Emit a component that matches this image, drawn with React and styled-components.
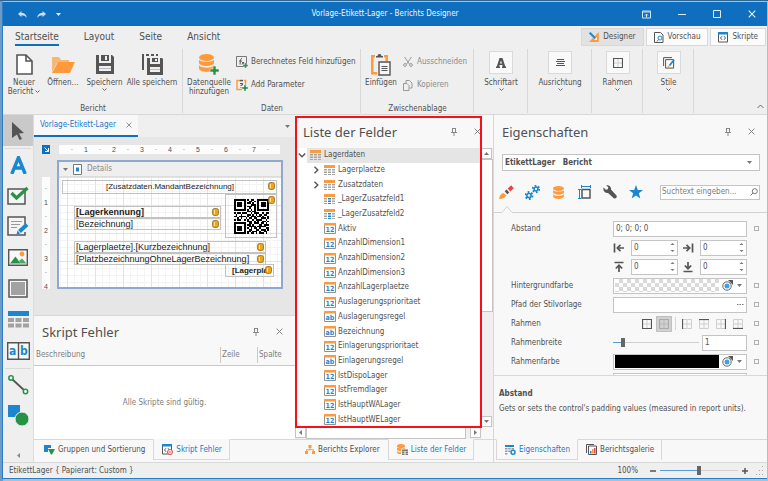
import React from "react";
import styled, { createGlobalStyle, css } from "styled-components";

const c = {
  title: "#106ebe",
  chrome: "#efefef",
  panel: "#f8f8f8",
  line: "#d8d8d8",
  text: "#505050",
  mute: "#8a8a8a",
  accent: "#1a78cc",
  blue: "#1b87cf",
  orange: "#ff9a3c",
  green: "#259247",
  dark: "#555555",
  field: "#c4c4c4",
};

const Global = createGlobalStyle`
  *, *::before, *::after { box-sizing: border-box; }
  body { margin: 0; font-family: "DejaVu Sans Condensed", "DejaVu Sans", sans-serif; font-size: 8px; line-height: 10px; color: ${c.text}; }
  button, input, select { font: inherit; color: inherit; margin: 0; padding: 0; }
  button { background: none; border: 0; white-space: nowrap; cursor: default; }
  svg { display: block; flex: none; }
`;

/* ---------- window ---------- */
const Desktop = styled.div`
  height: 100vh;
  padding: 1px 1px 2px 2px;
  background: linear-gradient(90deg, #6d9cc8 0 3px, #a9bfd3 3px);
  border-top: 1px solid #2d6592;
`;
const Window = styled.div`
  height: 100%;
  display: grid;
  grid-template-rows: 24px 89px minmax(0, 1fr) 16px;
  border-left: 1px solid #2b7cc2;
  border-bottom: 1px solid #2b7cc2;
  background: ${c.chrome};
`;
const TitleBar = styled.header`
  display: grid;
  grid-template-columns: 1fr auto 1fr;
  align-items: center;
  background: ${c.title};
  color: #f0f6fc;
`;
const QuickAccess = styled.div`
  display: flex;
  align-items: center;
  gap: 10px;
  padding-left: 15px;
`;
const WindowButtons = styled.div`
  display: flex;
  justify-content: flex-end;
  gap: 27px;
  padding-right: 11px;
`;
const IconButton = styled.button`
  display: grid;
  place-items: center;
  color: inherit;
`;
const ToolboxCollapse = styled(IconButton)`
  margin-top: auto;
`;

/* ---------- ribbon ---------- */
const Ribbon = styled.nav`
  display: grid;
  grid-template-rows: 22px minmax(0, 1fr);
  border-bottom: 1px solid ${c.line};
`;
const TabStrip = styled.div`
  display: flex;
  justify-content: space-between;
`;
const RibbonTabs = styled.div`
  display: flex;
  gap: 25px;
  padding-left: 12px;
`;
const RibbonTab = styled.button`
  font-size: 10px;
  line-height: 15px;
  padding-top: 3px;
  align-self: start;
  border-bottom: 2px solid ${(p) => (p.$active ? c.title : "transparent")};
`;
const ViewModes = styled.div`
  display: flex;
  gap: 2px;
  padding: 2px 1px 2px 0;
`;
const ModeButton = styled.button`
  display: flex;
  align-items: center;
  gap: 4px;
  padding: 0 7px;
  border: 1px solid ${c.line};
  background: ${(p) => (p.$active ? "#e2e2e2" : "#fbfbfb")};
`;
const Groups = styled.div`
  display: flex;
  padding: 1px 0 1px;
`;
const Group = styled.section`
  width: ${(p) => p.$width}px;
  display: flex;
  flex-direction: column;
  justify-content: space-between;
  border-right: 1px solid ${c.line};
  padding: 2px 2px 0 3px;
`;
const GroupItems = styled.div`
  display: flex;
  justify-content: ${(p) => (p.$center ? "center" : "flex-start")};
`;
const GroupLabel = styled.div`
  text-align: center;
  line-height: 8px;
`;
const BigButton = styled.button`
  width: ${(p) => p.$width}px;
  display: flex;
  flex-direction: column;
  align-items: center;
  line-height: 9px;
`;
const BigIcon = styled.span`
  height: 27px;
  display: grid;
  place-items: center;
`;
const FramedIcon = styled.span`
  width: 24px;
  height: 23px;
  margin-bottom: 4px;
  display: grid;
  place-items: center;
  border: 1px solid #dadada;
  background: #f9f9f9;
`;
const BigText = styled.span`
  display: flex;
  align-items: center;
  justify-content: center;
  gap: 2px;
`;
const SmallButtons = styled.div`
  display: flex;
  flex-direction: column;
  gap: 11px;
  padding: 5px 0 0 4px;
`;
const SmallButton = styled.button`
  display: flex;
  align-items: center;
  gap: 3px;
  height: 12px;
  color: ${(p) => (p.disabled ? c.mute : c.text)};
`;
const Collapse = styled(IconButton)`
  margin: auto 3px 4px auto;
`;

/* ---------- workspace ---------- */
const Workspace = styled.main`
  display: grid;
  grid-template-columns: 31px minmax(0, 261fr) minmax(0, 198fr) minmax(0, 274fr);
  min-height: 0;
`;
const Toolbox = styled.aside`
  display: flex;
  flex-direction: column;
  border-right: 1px solid #dcdcdc;
`;
const Tool = styled.button`
  height: 31px;
  display: grid;
  place-items: center;
  background: ${(p) => (p.$active ? "#c9c9c9" : "transparent")};
`;
const ToolRule = styled.div`
  height: 1px;
  margin: 2px 2px 0;
  background: #dadada;
`;
const Column = styled.div`
  display: grid;
  grid-template-rows: 22px minmax(0, 178fr) minmax(0, 147fr);
  min-height: 0;
`;
const DocTabs = styled.div`
  display: flex;
  justify-content: space-between;
  align-items: stretch;
  padding-right: 5px;
  background: ${c.chrome};
`;
const DocTab = styled.div`
  display: flex;
  align-items: center;
  gap: 10px;
  padding: 0 6px;
  color: ${c.accent};
  background: #f8f8f8;
  border-bottom: 2px solid ${c.title};
`;
const Designer = styled.section`
  background: #e6e6e6;
  display: grid;
  grid-template-columns: 8px minmax(0, 1fr);
  grid-template-rows: 9px minmax(0, 1fr);
  gap: 6px 7px;
  padding: 8px 12px 26px 8px;
`;
const Corner = styled.div`
  background: ${c.title};
  display: grid;
  place-items: center;
`;
const RulerX = styled.div`
  display: flex;
  align-items: center;
  margin: 0 3px 0 2px;
  padding-left: 6px;
  background: #fcfcfc;
  font: 7px/9px "Liberation Sans", sans-serif;
`;
const RulerY = styled.div`
  display: flex;
  flex-direction: column;
  margin-top: 17px;
  padding-top: 5px;
  background: #fcfcfc;
  font: 7px/14px "Liberation Sans", sans-serif;
`;
const Tick = styled.span`
  flex: 0 0 14px;
  text-align: center;
`;
const Band = styled.div`
  border: 2px solid #8ea9cd;
  display: flex;
  flex-direction: column;
  min-width: 0;
`;
const BandHead = styled.div`
  height: 15px;
  display: flex;
  align-items: center;
  gap: 5px;
  padding-left: 4px;
  background: #efefef;
  border-bottom: 1px solid #dcdcdc;
  color: #8a8a8a;
`;
const Sheet = styled.div`
  flex: 1;
  position: relative;
  overflow: hidden;
  background-color: #fff;
  background-image: linear-gradient(90deg, #e3e3e3 1px, transparent 1px), linear-gradient(#e3e3e3 1px, transparent 1px),
    linear-gradient(90deg, #f4f4f4 1px, transparent 1px), linear-gradient(#f4f4f4 1px, transparent 1px);
  background-size: 28px 28px, 28px 28px, 7px 7px, 7px 7px;
  background-position: 8px 0;
`;
const Item = styled.div`
  position: absolute;
  left: ${(p) => p.$x}px;
  top: ${(p) => p.$y}px;
  width: ${(p) => p.$w}px;
  height: ${(p) => p.$h}px;
  display: flex;
  align-items: center;
  justify-content: ${(p) => (p.$center ? "center" : "flex-start")};
  padding-left: 1px;
  border: 1px solid #c2c2c2;
  font: ${(p) => (p.$bold ? "bold" : "normal")} ${(p) => p.$size || 9}px/10px "Liberation Sans", sans-serif;
  color: #222;
  white-space: nowrap;
`;
const Pin = styled.span`
  position: absolute;
  top: 1px;
  right: 1px;
`;

/* ---------- docked panels ---------- */
const Panel = styled.section`
  display: flex;
  flex-direction: column;
  min-width: 0;
  min-height: 0;
  position: relative;
  background: ${c.panel};
  border-left: ${(p) => (p.$edge ? `1px solid ${c.line}` : "0")};
  border-top: ${(p) => (p.$top ? `1px solid ${c.line}` : "0")};
`;
const PanelHead = styled.div`
  height: ${(p) => p.$height || 33}px;
  flex: none;
  display: flex;
  align-items: center;
  justify-content: space-between;
  padding: 0 12px 0 8px;
`;
const PanelTitle = styled.h2`
  margin: 0;
  font-family: "Noto Sans", sans-serif;
  font-size: 13px;
  line-height: 18px;
  font-weight: 400;
`;
const PanelTools = styled.div`
  display: flex;
  align-items: center;
  gap: 17px;
  color: #7d7d7d;
`;
const DockTabs = styled.div`
  flex: none;
  height: 23px;
  display: flex;
  border-top: 1px solid ${c.line};
  padding-left: ${(p) => p.$left || 0}px;
  background: ${c.panel};
`;
const DockTab = styled.button`
  height: 21px;
  margin-top: -1px;
  display: flex;
  align-items: center;
  gap: 3px;
  padding: 0 7px 0 ${(p) => p.$pad || 8}px;
  color: ${(p) => (p.$active ? c.accent : c.text)};
  ${(p) =>
    p.$active
      ? css`
          background: ${c.panel};
          border: 1px solid ${c.line};
          border-top-color: ${c.panel};
        `
      : css`
          border-right: 1px solid ${p.$rule ? c.line : "transparent"};
        `}
`;
const ErrorTable = styled.table`
  flex: 1;
  width: 100%;
  display: flex;
  flex-direction: column;
  color: #7c7c7c;
`;
const ErrorHead = styled.thead`
  display: block;
  border-bottom: 1px solid #c9c9c9;
  padding-bottom: 2px;
`;
const ErrorRow = styled.tr`
  display: grid;
  grid-template-columns: minmax(0, 1fr) 37px 38px;
`;
const ErrorCell = styled.th`
  font-weight: 400;
  text-align: left;
  line-height: 14px;
  padding-left: 1px;
  border-left: 1px solid ${(p) => (p.$rule ? "#c9c9c9" : "transparent")};
`;
const ErrorBody = styled.tbody`
  flex: 1;
  display: grid;
  place-items: center;
  background: #fff;
`;

/* ---------- field list ---------- */
const Highlight = styled.div`
  position: absolute;
  inset: 1px 11px 34px 0;
  border: 2px solid #fa0f16;
  pointer-events: none;
`;
const TreeArea = styled.div`
  flex: 1;
  min-height: 0;
  display: grid;
  grid-template-columns: minmax(0, 1fr) 12px;
  grid-template-rows: minmax(0, 1fr) 12px;
`;
const Tree = styled.ul`
  margin: 0;
  padding: 0 0 0 3px;
  list-style: none;
  display: grid;
  grid-auto-rows: minmax(0, 1fr);
  background: #fff;
`;
const Node = styled.li`
  display: grid;
  grid-template-columns: 10px 12px 1fr;
  gap: 0 2px;
  align-items: center;
  white-space: nowrap;
  padding-left: ${(p) => p.$level * 14}px;
  background: ${(p) => (p.$selected ? "linear-gradient(90deg, #fff 9px, #e5e5e5 9px)" : "none")};
`;
const Scroll = styled.div`
  display: flex;
  flex-direction: ${(p) => (p.$row ? "row" : "column")};
  background: #efefef;
`;
const ScrollButton = styled.button`
  flex: none;
  width: 11px;
  height: 11px;
  display: grid;
  place-items: center;
  border: 1px solid ${c.field};
  background: #fff;
`;
const Thumb = styled.div`
  flex: ${(p) => p.$grow};
  border: 1px solid ${c.field};
  background: #fff;
`;
const Gap = styled.div`
  flex: ${(p) => p.$grow};
`;

/* ---------- properties ---------- */
const ObjectSelect = styled.div`
  margin: 6px 7px 0 8px;
  height: 17px;
  flex: none;
  display: grid;
  grid-template-columns: minmax(0, 1fr) 12px;
  align-items: center;
  border: 1px solid ${c.field};
  background: #fff;
  select {
    appearance: none;
    border: 0;
    background: none;
    padding-left: 2px;
    font-weight: 700;
    outline: 0;
  }
`;
const Categories = styled.div`
  flex: none;
  height: 38px;
  display: flex;
  align-items: center;
  justify-content: space-between;
  padding: 4px 7px 0 4px;
`;
const CategoryButtons = styled.div`
  display: flex;
  gap: 10px;
`;
const Category = styled(IconButton)`
  width: 16px;
  height: 16px;
`;
const Search = styled.label`
  width: 100px;
  height: 15px;
  display: flex;
  align-items: center;
  border: 1px solid ${c.field};
  background: #fff;
  padding: 0 1px;
  input {
    flex: 1;
    min-width: 0;
    border: 0;
    outline: 0;
    background: none;
  }
  input::placeholder {
    color: #7c7c7c;
    opacity: 1;
  }
`;
const Notch = styled.svg`
  width: 100%;
  height: 7px;
  margin-top: -3px;
  stroke: #d2d2d2;
  fill: none;
`;
const PropertyList = styled.div`
  flex: 1;
  min-height: 0;
  overflow: hidden;
  padding: 7px 8px 0 17px;
  display: flex;
  flex-direction: column;
  gap: 2px;
  border-bottom: 1px solid ${c.line};
`;
const PropertyRow = styled.div`
  flex: none;
  height: 17px;
  display: grid;
  grid-template-columns: minmax(0, 102fr) minmax(0, 134fr) 12px;
  align-items: center;
`;
const Marker = styled.button`
  width: 5px;
  height: 5px;
  border: 1px solid #b0b0b0;
  justify-self: end;
`;
const Box = styled.div`
  height: 16px;
  display: flex;
  align-items: center;
  border: 1px solid ${c.field};
  background: #fff;
  padding: 0 ${(p) => (p.$tight ? 1 : 2)}px;
  min-width: 0;
  input {
    flex: 1;
    width: 100%;
    min-width: 0;
    border: 0;
    outline: 0;
    background: none;
  }
`;
const Pair = styled.div`
  display: grid;
  grid-template-columns: 14px minmax(0, 1fr) 14px minmax(0, 1fr);
  gap: 0 4px;
  align-items: center;
`;
const Swatch = styled.span`
  flex: 1;
  height: 13px;
  background: ${(p) => (p.$black ? "#000" : "repeating-conic-gradient(#d9d9d9 0 25%, #fff 0 50%) 0 0 / 8px 8px")};
`;
const SwatchTools = styled.span`
  width: 26px;
  display: flex;
  align-items: center;
  justify-content: space-between;
  padding: 0 3px;
`;
const Borders = styled.div`
  display: flex;
  align-items: center;
  justify-content: flex-end;
  gap: 1px;
  padding-right: 1px;
`;
const BorderButton = styled.button`
  width: 16px;
  height: 16px;
  display: grid;
  place-items: center;
  background: ${(p) => (p.$active ? "#d0d0d0" : "none")};
  border: 1px solid ${(p) => (p.$active ? "#c0c0c0" : "transparent")};
`;
const BorderRule = styled.span`
  width: 1px;
  height: 13px;
  margin: 0 2px;
  background: ${c.line};
`;
const WidthRow = styled.div`
  display: grid;
  grid-template-columns: minmax(0, 1fr) 45px;
  gap: 3px;
  align-items: center;
`;
const Range = styled.input`
  appearance: none;
  width: 100%;
  height: 11px;
  background: linear-gradient(90deg, #5b9bd5 ${(p) => p.$fill}, #cfcfcf ${(p) => p.$fill}) center / 100% 1px no-repeat;
  &::-webkit-slider-thumb {
    appearance: none;
    width: 4px;
    height: 9px;
    background: #666;
  }
`;
const Description = styled.div`
  flex: none;
  height: 63px;
  padding: 12px 5px 0;
  h3 {
    margin: 0 0 5px;
    font-size: 8px;
    line-height: 11px;
  }
  p {
    margin: 0;
    white-space: nowrap;
  }
`;

const StatusBar = styled.footer`
  display: flex;
  align-items: center;
  justify-content: space-between;
  padding: 0 3px 0 6px;
  border-top: 1px solid ${c.line};
`;
const Zoom = styled.div`
  display: flex;
  align-items: center;
  gap: 4px;
`;
const ZoomText = styled.span`
  margin-right: 8px;
`;
const ZoomTrack = styled.div`
  width: 78px;
  display: grid;
`;

/* ---------- icons ---------- */
const Ico = ({ w = 16, h = w, box, children, ...rest }) => (
  <svg width={w} height={h} viewBox={box || `0 0 ${w} ${h}`} fill="none" aria-hidden="true" {...rest}>
    {children}
  </svg>
);
const Close = ({ size = 7, color = "#7d7d7d" }) => (
  <Ico w={size} box="0 0 8 8" stroke={color} strokeWidth="1.1"><path d="M.7.7l6.6 6.6M7.3.7L.7 7.3" /></Ico>
);
const PinIcon = () => (
  <Ico w={6} h={8} stroke="#888"><path d="M1 .5h4M1.500 1v3M4.500 1v3M0 4.500h6M3 5v3" /></Ico>
);
const Caret = ({ dir = "down", color = "#777" }) => {
  const d = { down: "M0 1h5L2.500 4z", up: "M0 4h5L2.500 1z", left: "M4 0v5L1 2.500z", right: "M1 0v5l3-2.500z" }[dir];
  return <Ico w={5}><path d={d} fill={color} /></Ico>;
};
const Chevron = () => <Ico w={5} h={5} stroke="#666"><path d="M.5 1.500l2 2 2-2" /></Ico>;
const Undo = ({ flip }) => (
  <Ico w={9} h={7}><path transform={flip ? "matrix(-1 0 0 1 9 0)" : undefined} fill="#c9e2f8" d="M0 3L3.500 0v2C7 2 8.500 4 8.800 7 7.500 4.800 6 4.200 3.500 4.200V6z" /></Ico>
);
const Plus = ({ x, y, s = 8 }) => (
  <path transform={`translate(${x} ${y}) scale(${s / 8})`} fill={c.green} stroke="#efefef" strokeWidth=".5" d="M2.700 0h2.600v2.700H8v2.600H5.300V8H2.700V5.300H0V2.700h2.700z" />
);
const NewDoc = () => (
  <Ico w={17} h={21} stroke={c.dark} strokeWidth="1.600"><path fill="#fff" d="M1 1h9l6 6v13H1z" /><path d="M10 1v6h6" /></Ico>
);
const OpenFolder = () => (
  <Ico w={23} h={17}><path fill="#f7b876" d="M0 16V1h7l2 3h8v3H5z" /><path fill={c.orange} d="M6 6h17l-5 11H0z" /></Ico>
);
const SaveIcon = () => (
  <Ico w={18} h={19}><path fill={c.dark} d="M0 0h3v8h12V0h1l2 2v17H0z" /><path fill={c.dark} d="M5 0h8v6H5z" /><path fill="#efefef" d="M9 1h2v4H9zM3 11h12v5H3z" /><path fill="#bbb" d="M3 13h12v1H3z" /></Ico>
);
const SaveAll = () => (
  <Ico w={21} h={21}>
    <path fill={c.dark} d="M0 0h2v16H0zM4 0h3v2H4zM9 0h3v2H9zM14 0h2v2h-2zM5 4h3v6h10V4h2l1 1v16H5z" />
    <path fill={c.dark} d="M10 4h6v4h-6z" /><path fill="#efefef" d="M13 5h2v2h-2zM8 13h10v5H8z" /><path fill="#bbb" d="M8 15h10v1H8z" />
  </Ico>
);
const Database = ({ w = 15, h = 18, plus }) => (
  <Ico w={plus ? w + 5 : w} h={plus ? h + 3 : h} box={plus ? "0 0 20 21" : "0 0 15 18"}>
    <ellipse cx="7.500" cy="3.500" rx="7.500" ry="3.500" fill={c.orange} />
    <path fill={c.orange} d="M0 5.500c1 3 14 3 15 0V9c-1 4-14 4-15 0zM0 11c1 3.500 14 3.500 15 0v3.500c-1 4.500-14 4.500-15 0z" />
    {plus && <Plus x={11} y={12} s={9} />}
  </Ico>
);
const Fx = () => (
  <Ico w={12} h={12}><path d="M.5.500h10v10H.5z" stroke="#777" /><path stroke={c.dark} d="M6 2.500C4.500 2.200 4.500 4 4 8.500M3 5h3M6 6l2 2.500M8 6L6 8.500" /><Plus x={7} y={7} s={5} /></Ico>
);
const Param = () => (
  <Ico w={12} h={12}><path d="M3 1.500H1v9h5M8 1.500h1.500V6" stroke={c.orange} strokeWidth="1.400" /><path d="M3.500.8h3.500v1.500H3.500z" fill={c.dark} /><path stroke={c.dark} d="M4 4.500h2.500V6H5v1M5 8v1" /><Plus x={6} y={6} s={6} /></Ico>
);
const Paste = () => (
  <Ico w={20} h={22}>
    <path fill={c.orange} d="M0 1h4v2.500H2.500V18H6v2.500H0zM13 1h4v6h-2.500V3.500H13z" /><path fill={c.dark} d="M5 3.500V2h1.500a2 2 0 014 0H12v1.500z" />
    <path stroke={c.dark} strokeWidth="1.400" fill="#f6f6f6" d="M8 8h11v13H8z" /><path stroke={c.dark} d="M10.500 12.500h6M10.500 14.500h6M10.500 16.500h6" />
  </Ico>
);
const Cut = () => (
  <Ico w={12} h={10} box="-1 0 12 10" stroke="#999"><path d="M1.500 0l5 7M8.500 0l-5 7" /><circle cx="2" cy="8" r="1.400" /><circle cx="8" cy="8" r="1.400" /></Ico>
);
const Copy = () => (
  <Ico w={12} h={11} box="-1 0 12 11" stroke="#999"><path d="M3 3.500V.5h3.500L9 3v5H6.500M.5 3.500h3.500l2 2v5H.5z" /></Ico>
);
const FontIcon = () => <Ico w={10} h={10}><path fill={c.dark} fillRule="evenodd" d="M3.500 0h3L9.300 8.500H10V10H6V8.500h.8L6.300 7H3.600l-.5 1.500H4V10H0V8.500h.8zM5 2.500L4 5.500h2z" /></Ico>;
const Lines = () => <Ico w={9} h={9} stroke={c.dark}><path d="M1 1.500h7M0 3.500h9M1 5.500h7M0 7.500h9" /></Ico>;
const GridIcon = ({ side = "all", faded }) => {
  const strong = faded ? "#aaa" : c.dark;
  const sides = { left: "M.5 0v10", top: "M0 .5h10", right: "M9.500 0v10", bottom: "M0 9.500h10", all: "M.5.5h9v9h-9z" };
  return (
    <Ico w={10}><path stroke={faded ? "#b8b8b8" : "#cfcfcf"} d="M.5.5h9v9h-9zM5 1v8M1 5h8" /><path stroke={strong} strokeWidth="1.200" d={sides[side]} /></Ico>
  );
};
const StyleIcon = () => (
  <Ico w={12} h={12}><path stroke={c.dark} d="M.6 9V.6H9M2.600 2.600h8v8.500h-8z" /><path d="M6.500 8.500L11 3" stroke={c.blue} strokeWidth="1.800" /><path d="M4.500 11l.5-2.500 2 1.500z" fill={c.orange} /></Ico>
);
const DesignerIcon = () => (
  <Ico w={10} h={10}><path fill={c.orange} d="M9.800 0v10H0z" /><path fill="#efefef" d="M8 5v3H5z" /><path stroke={c.blue} strokeWidth="2" d="M.7.7L6 6" /></Ico>
);
const PreviewIcon = () => (
  <Ico w={10} h={11}><path stroke={c.dark} fill="#fff" d="M.5.5h6L9 3v7.500H.5z" /><circle cx="6" cy="6" r="2" stroke={c.blue} /><path stroke={c.blue} d="M4.500 7.500L3 9.500" /></Ico>
);
const ScriptIcon = ({ error }) => (
  <Ico w={error ? 11 : 10} h={11}><path stroke={c.dark} fill="#fff" d="M.5.5h9v9.500h-9z" /><path fill={c.blue} d="M0 0h10v2.500H0z" /><path stroke={c.dark} d="M4 4.200L2.500 6 4 7.800M6 4.200L7.500 6 6 7.800" />{error && <><circle cx="8" cy="8" r="2.500" stroke="#e8454a" fill="#fff" /><path stroke="#e8454a" d="M6.500 8h3" /></>}</Ico>
);
const Arrow = () => <Ico w={12} h={18}><path fill={c.dark} d="M0 0l12 11-5 .5 3 5.500-2.500 1-2.500-5.500L0 16z" /></Ico>;
const LabelIcon = () => <Ico w={17} h={18}><path stroke={c.blue} strokeWidth="3.400" d="M1.800 18L8.500 1.500 15.200 18M4 12h9" /></Ico>;
const CheckTool = () => (
  <Ico w={22} h={19}><path stroke={c.dark} strokeWidth="1.500" fill="#f4f4f4" d="M1 3h17v15H1z" /><path stroke={c.green} strokeWidth="3.200" d="M4.500 7l5 5L20.500 2" /></Ico>
);
const RichText = () => (
  <Ico w={22} h={21}><path stroke={c.dark} strokeWidth="1.500" fill="#f4f4f4" d="M18 8V1H1v18h17v-3" /><path stroke="#999" strokeWidth="1.200" d="M4 5.500h11M4 8.500h9M4 11.500h6" /><path stroke={c.blue} strokeWidth="4" d="M12.500 15.500l7.500-7" /><path fill={c.blue} d="M9.500 18.500l1-4 2.800 3z" /></Ico>
);
const Picture = () => (
  <Ico w={20} h={17}><path stroke={c.dark} strokeWidth="1.400" fill="#f8f8f8" d="M.7.7h18.600v15.600H.7z" /><circle cx="14" cy="5" r="2.400" fill={c.orange} /><path fill={c.green} d="M2 14.500l5.500-7 5 7z" /><path fill="#4aa866" d="M11 12l3-2.500 4.500 5h-6z" /></Ico>
);
const PanelTool = () => <Ico w={20} h={19}><path stroke={c.dark} strokeWidth="1.500" fill="#f8f8f8" d="M1 1h18v17H1z" /><path fill="#a2a2a2" d="M3 3h14v13H3z" /></Ico>;
const TableTool = () => <Ico w={21} h={17}><path fill={c.blue} d="M0 0h21v5H0z" /><path fill="#a2a2a2" d="M0 7h6v4H0zM7.500 7h6v4h-6zM15 7h6v4h-6zM0 12.500h6v4H0zM7.500 12.500h6v4h-6zM15 12.500h6v4h-6z" /></Ico>;
const CombTool = () => (
  <Ico w={23} h={18}><path stroke={c.dark} strokeWidth="1.400" fill="#f8f8f8" d="M.7.7h21.600v16.600H.7zM11.500 1v16" /><text x="2" y="13" fontSize="12" fontWeight="700" fill={c.blue}>a</text><text x="13" y="13" fontSize="12" fontWeight="700" fill={c.blue}>b</text></Ico>
);
const LineTool = () => <Ico w={21} h={20}><path stroke={c.dark} strokeWidth="1.800" d="M4 4l13 12" /><circle cx="3" cy="3" r="2.200" fill="#fff" stroke={c.green} strokeWidth="1.500" /><circle cx="17.500" cy="16.500" r="2.200" fill="#fff" stroke={c.green} strokeWidth="1.500" /></Ico>;
const ShapeTool = () => <Ico w={21} h={21}><path fill={c.blue} d="M0 0h12v12H0z" /><circle cx="14" cy="14" r="7" fill={c.green} stroke="#efefef" /></Ico>;
const TableIcon = ({ column }) => (
  <Ico w={11} h={10}><path fill={c.orange} d="M0 0h11v3H0z" /><path fill="#a5a5a5" d="M0 4h3v1.500H0zM8 4h3v1.500H8zM0 6.500h3V8H0zM8 6.500h3V8H8zM0 9h3v1H0zM8 9h3v1H8z" /><path fill={column ? c.blue : "#a5a5a5"} d="M4 4h3v1.500H4zM4 6.500h3V8H4zM4 9h3v1H4z" /></Ico>
);
const FieldIcon = ({ label }) => (
  <Ico w={12} h={11}><path stroke="#909090" fill="#fff" d="M.5.5h11v10H.5z" /><path fill={c.orange} d="M0 0h12v2.500H0z" /><text x="6" y="8.800" fontSize="7" fontWeight="700" textAnchor="middle" fill={c.blue}>{label}</text></Ico>
);
const Cylinder = () => (
  <Ico w={7} h={8}><rect x=".5" y=".5" width="6" height="7" rx="2" fill="#eba51c" stroke="#9a6614" strokeWidth=".8" /><path stroke="#ffe9a8" d="M2.500 2v4" /></Ico>
);
const Expander = ({ open }) => <Ico w={8} h={8} stroke={c.dark} strokeWidth="1.400"><path d={open ? "M.8 2.500L4 5.800l3.200-3.300" : "M2.500.8L5.800 4 2.500 7.200"} /></Ico>;
const Brush = () => <Ico w={15} h={14}><path stroke="#e8434a" strokeWidth="4" d="M10 5l3.500-3.200" /><path stroke={c.dark} strokeWidth="4" d="M7 7.700l2-1.800" /><path fill={c.orange} d="M0 14c.5-3 2-5.500 4.500-6L7.500 10.500C6 13 3 14 0 14z" /></Ico>;
const Gear = ({ x, y, r }) => <g transform={`translate(${x} ${y})`}><circle r={r} stroke={c.blue} strokeWidth="2" strokeDasharray={`${(r * 6.283) / 12}`} /><circle r={r - 1.300} stroke={c.blue} strokeWidth="1.500" /></g>;
const Gears = () => <Ico w={15} h={15}><Gear x={4} y={10.500} r={3.400} /><Gear x={11} y={4} r={3.200} /></Ico>;
const Size = () => <Ico w={13} h={14}><path stroke={c.dark} strokeWidth="1.500" d="M4 4.500h8V13H4z" /><path stroke={c.blue} d="M3.500 1.500h9M3.500 0v3M12.500 0v3M1.500 4v9.500M0 4.500h3M0 13.500h3" /></Ico>;
const Wrench = () => <Ico w={14} h={14}><path fill={c.dark} d="M.5 2.500l2.300 2.300 2-.6.500-2L3.200.4C5.800-.5 8.500 1.500 8 4.500l5.500 6c1 2-1 3.800-2.700 2.700L5 8C2 8.500-.3 5.500.5 2.500z" /></Ico>;
const Star = () => <Ico w={14} h={14}><path fill={c.blue} d="M7 0l1.800 5H14L9.800 8.200l1.500 5.300L7 10.400l-4.300 3.100 1.500-5.300L0 5h5.200z" /></Ico>;
const Lens = () => <Ico w={8} h={8} stroke="#777"><circle cx="4.800" cy="3.200" r="2.500" /><path d="M3 5L.5 7.500" /></Ico>;
const PadArrow = ({ turn }) => <Ico w={12} h={12} stroke={c.dark} strokeWidth="1.700"><path transform={`rotate(${turn} 6 6)`} d="M1.500 1.500v9M11 6H4.500M7.500 2.800L4.300 6l3.200 3.200" /></Ico>;
const ColorEye = () => <Ico w={11} h={11}><circle cx="5" cy="6" r="4.200" stroke="#666" fill="#fff" /><path fill="#555" d="M6 0h5v5z" /><circle cx="5" cy="6" r="2.500" fill="#3da4e4" /></Ico>;
const Spin = () => <Ico w={5} h={11}><path fill="#777" d="M.5 3h4L2.500 1zM.5 8h4l-2 2z" /></Ico>;
const Dots = () => <Ico w={7} h={2}><path fill="#777" d="M0 0h1.500v1H0zM2.500 0H4v1H2.500zM5 0h1.500v1H5z" /></Ico>;
const SortIcon = () => <Ico w={11} h={10}><path fill={c.blue} d="M0 0h7v3H4v4H0z" /><path fill={c.green} d="M4 4h7L8 9.500H7z" /></Ico>;
const Hierarchy = () => <Ico w={10} h={9}><path fill={c.orange} d="M3.500 0h3v3h-3zM0 6h3v3H0zM7 6h3v3H7z" /><path stroke={c.orange} d="M5 3v2M1.500 6V4.700h7V6" /></Ico>;
const FieldListIcon = () => <Ico w={11} h={11}><ellipse cx="4" cy="2" rx="4" ry="2" fill={c.orange} /><path fill={c.orange} d="M0 3.200c1 1.500 7 1.500 8 0v1.600H4v2.400C2 7 0 6.500 0 5.500zM0 7c1 1 2 1.300 4 1.300V10C2 10 0 9.500 0 8.500z" /><path fill="#777" d="M5 5.500h6V7H5zM5 7.500h2.500V9H5zM8.500 7.500H11V9H8.500zM5 9.500h2.500V11H5zM8.500 9.500H11V11H8.500z" /></Ico>;
const PropsIcon = () => <Ico w={11} h={10}><path fill={c.blue} d="M0 0h9v2H0z" /><path fill="#999" d="M0 3h2.500v1.500H0zM3.200 3h2.500v1.500H3.200zM6.500 3H9v1.500H6.500zM0 5.500h2.500V7H0zM3.200 5.500h2V7h-2zM0 8h2.500v1.500H0z" /><circle cx="8" cy="7.200" r="2" stroke={c.blue} strokeWidth="1.500" /></Ico>;
const Gallery = () => <Ico w={11} h={11}><path stroke={c.dark} d="M.5 9V.5H8M2.500 2h8v8.500h-8z" /><path fill={c.blue} d="M4 7h1.500v2.500H4z" /><path fill={c.orange} d="M6 5h1.500v4.500H6z" /><path fill="#e8434a" d="M8 4h1.500v5.500H8z" /></Ico>;

const qrRows = [
  "111111101011001111111", "100000100110101000001", "101110101101001011101", "101110100011101011101",
  "101110101110101011101", "100000100100101000001", "111111101010101111111", "000000001101100000000",
  "101101110010111001011", "010010001101010110110", "110111101011101101001", "001010010110110011101",
  "101100101001011110010", "000000001110101001101", "111111100110111011010", "100000101101000110111",
  "101110100111101111100", "101110101010110100011", "101110100110011011101", "100000101101110100110", "111111101011010111010",
];
const QrCode = () => (
  <Ico w={35} h={35} box="0 0 21 21" shapeRendering="crispEdges">
    <path fill="#000" d={qrRows.map((r, y) => [...r].map((v, x) => (v === "1" ? `M${x} ${y}h1v1h-1z` : "")).join("")).join("")} />
  </Ico>
);

/* ---------- pieces ---------- */
const Big = ({ width, icon, framed, lines, menu, inlineMenu }) => (
  <BigButton $width={width}>
    {framed ? <FramedIcon>{icon}</FramedIcon> : <BigIcon>{icon}</BigIcon>}
    {lines.map((t, i) => (
      <BigText key={t}>{t}{inlineMenu && i === lines.length - 1 && <Chevron />}</BigText>
    ))}
    {menu && <Chevron />}
  </BigButton>
);
const Head = ({ title, ...rest }) => (
  <PanelHead {...rest}>
    <PanelTitle>{title}</PanelTitle>
    <PanelTools>
      <IconButton aria-label="Anheften"><PinIcon /></IconButton>
      <IconButton aria-label="Schließen"><Close /></IconButton>
    </PanelTools>
  </PanelHead>
);
const tree = [
  [0, "table", "Lagerdaten", true], [1, "table", "Lagerplaetze", false], [1, "table", "Zusatzdaten", false],
  [1, "column", "_LagerZusatzfeld1"], [1, "column", "_LagerZusatzfeld2"], [1, "12", "Aktiv"],
  [1, "12", "AnzahlDimension1"], [1, "12", "AnzahlDimension2"], [1, "12", "AnzahlDimension3"],
  [1, "12", "AnzahlLagerplaetze"], [1, "12", "Auslagerungsprioritaet"], [1, "ab", "Auslagerungsregel"],
  [1, "ab", "Bezeichnung"], [1, "12", "Einlagerungsprioritaet"], [1, "ab", "Einlagerungsregel"],
  [1, "12", "IstDispoLager"], [1, "12", "IstFremdlager"], [1, "12", "IstHauptWALager"], [1, "12", "IstHauptWELager"],
];
const Spinner = ({ label }) => (
  <Box><input aria-label={label} defaultValue="0" /><Spin /></Box>
);
const Property = ({ label, id, children, marker = true }) => (
  <PropertyRow>
    {id ? <label htmlFor={id}>{label}</label> : <span>{label}</span>}
    {children}
    {marker && <Marker aria-label={`${label} zurücksetzen`} />}
  </PropertyRow>
);
const tools = [[<LabelIcon />, "Label"], [<CheckTool />, "Check Box"], [<RichText />, "Rich Text"], [<Picture />, "Bild"], [<PanelTool />, "Panel"], [<TableTool />, "Tabelle"], [<CombTool />, "Zeichenkamm"]];

export default function App() {
  return (
    <Desktop>
      <Global />
      <Window>
        <TitleBar>
          <QuickAccess>
            <IconButton aria-label="Rückgängig"><Undo /></IconButton>
            <IconButton aria-label="Wiederholen"><Undo flip /></IconButton>
            <IconButton aria-label="Anpassen"><Caret color="#e6f2fc" /></IconButton>
          </QuickAccess>
          <span>Vorlage-Etikett-Lager - Berichts Designer</span>
          <WindowButtons>
            <IconButton aria-label="Ribbon"><Ico w={9} h={9} stroke="#cfe5f8"><path d="M.5 1h8v7h-8zM.5 2h8M4.500 7.500V4M3 5.500L4.500 4 6 5.500" /></Ico></IconButton>
            <IconButton aria-label="Minimieren"><Ico w={8} h={8} stroke="#dcecfa"><path d="M0 4.500h8" /></Ico></IconButton>
            <IconButton aria-label="Maximieren"><Ico w={8} h={8} stroke="#dcecfa"><path d="M.5.5h7v7h-7z" /></Ico></IconButton>
            <IconButton aria-label="Schließen"><Close size={8} color="#e6f2fc" /></IconButton>
          </WindowButtons>
        </TitleBar>

        <Ribbon>
          <TabStrip>
            <RibbonTabs>
              <RibbonTab $active>Startseite</RibbonTab>
              <RibbonTab>Layout</RibbonTab>
              <RibbonTab>Seite</RibbonTab>
              <RibbonTab>Ansicht</RibbonTab>
            </RibbonTabs>
            <ViewModes>
              <ModeButton $active><DesignerIcon />Designer</ModeButton>
              <ModeButton><PreviewIcon />Vorschau</ModeButton>
              <ModeButton><ScriptIcon />Skripte</ModeButton>
            </ViewModes>
          </TabStrip>
          <Groups>
            <Group $width={180}>
              <GroupItems>
                <Big width={36} icon={<NewDoc />} lines={["Neuer", "Bericht"]} inlineMenu />
                <Big width={42} icon={<OpenFolder />} lines={["Öffnen…"]} />
                <Big width={41} icon={<SaveIcon />} lines={["Speichern"]} menu />
                <Big width={54} icon={<SaveAll />} lines={["Alle speichern"]} />
              </GroupItems>
              <GroupLabel>Bericht</GroupLabel>
            </Group>
            <Group $width={178}>
              <GroupItems>
                <Big width={46} icon={<Database plus />} lines={["Datenquelle", "hinzufügen"]} />
                <SmallButtons>
                  <SmallButton><Fx />Berechnetes Feld hinzufügen</SmallButton>
                  <SmallButton><Param />Add Parameter</SmallButton>
                </SmallButtons>
              </GroupItems>
              <GroupLabel>Daten</GroupLabel>
            </Group>
            <Group $width={113}>
              <GroupItems>
                <Big width={34} icon={<Paste />} lines={["Einfügen"]} />
                <SmallButtons>
                  <SmallButton disabled><Cut />Ausschneiden</SmallButton>
                  <SmallButton disabled><Copy />Kopieren</SmallButton>
                </SmallButtons>
              </GroupItems>
              <GroupLabel>Zwischenablage</GroupLabel>
            </Group>
            <Group $width={54}><GroupItems $center><Big width={44} framed icon={<FontIcon />} lines={["Schriftart"]} menu /></GroupItems></Group>
            <Group $width={64}><GroupItems $center><Big width={50} framed icon={<Lines />} lines={["Ausrichtung"]} menu /></GroupItems></Group>
            <Group $width={51}><GroupItems $center><Big width={40} framed icon={<GridIcon />} lines={["Rahmen"]} menu /></GroupItems></Group>
            <Group $width={51}><GroupItems $center><Big width={40} framed icon={<StyleIcon />} lines={["Stile"]} menu /></GroupItems></Group>
            <Collapse aria-label="Ribbon einklappen"><Ico w={7} h={5} stroke="#666"><path d="M.5 4l3-3 3 3" /></Ico></Collapse>
          </Groups>
        </Ribbon>

        <Workspace>
          <Toolbox>
            <Tool $active aria-label="Zeiger"><Arrow /></Tool>
            <ToolRule />
            {tools.map(([icon, name]) => <Tool key={name} aria-label={name}>{icon}</Tool>)}
            <ToolRule />
            <Tool aria-label="Linie"><LineTool /></Tool>
            <Tool aria-label="Form"><ShapeTool /></Tool>
            <ToolboxCollapse aria-label="Toolbox einklappen"><Ico w={5} h={12}><path fill="#888" d="M4 3v5L1 5.500z" /></Ico></ToolboxCollapse>
          </Toolbox>

          <Column>
            <DocTabs>
              <DocTab>Vorlage-Etikett-Lager<IconButton aria-label="Tab schließen"><Close size={6} /></IconButton></DocTab>
              <IconButton aria-label="Weitere Tabs"><Caret /></IconButton>
            </DocTabs>
            <Designer>
              <Corner><Ico w={5} h={5} stroke="#fff"><path d="M.5.5l3.500 3.500M4.500 1v3.500H1" /></Ico></Corner>
              <RulerX>{[..."·1·2·3·4·5·6·7·"].map((t, i) => <Tick key={i}>{t}</Tick>)}</RulerX>
              <RulerY>{[..."·1·2·3·4"].map((t, i) => <Tick key={i}>{t}</Tick>)}</RulerY>
              <Band>
                <BandHead><Caret /><Ico w={9} h={11}><path stroke="#777" fill="#fff" d="M.5.5h8v10h-8z" /><path fill={c.blue} d="M3 3.500h3v4H3z" /></Ico>Details</BandHead>
                <Sheet>
                  <Item $x={3} $y={3} $w={215} $h={14} $size={8} $center>[Zusatzdaten.MandantBezeichnung]<Pin><Cylinder /></Pin></Item>
                  <Item $x={166} $y={17} $w={52} $h={44} $center><QrCode /><Pin><Cylinder /></Pin></Item>
                  <Item $x={15} $y={29} $w={147} $h={12} $bold>[Lagerkennung]<Pin><Cylinder /></Pin></Item>
                  <Item $x={15} $y={41} $w={147} $h={12}>[Bezeichnung]<Pin><Cylinder /></Pin></Item>
                  <Item $x={15} $y={64} $w={192} $h={12}>[Lagerplaetze].[Kurzbezeichnung]<Pin><Cylinder /></Pin></Item>
                  <Item $x={15} $y={76} $w={192} $h={12}>[PlatzbezeichnungOhneLagerBezeichnung]<Pin><Cylinder /></Pin></Item>
                  <Item $x={166} $y={87} $w={49} $h={13} $size={8} $bold $center>[Lagerpla<Pin><Cylinder /></Pin></Item>
                </Sheet>
              </Band>
            </Designer>
            <Panel $top>
              <Head title="Skript Fehler" $height={31} />
              <ErrorTable>
                <ErrorHead><ErrorRow><ErrorCell>Beschreibung</ErrorCell><ErrorCell $rule>Zeile</ErrorCell><ErrorCell $rule>Spalte</ErrorCell></ErrorRow></ErrorHead>
                <ErrorBody><tr><td colSpan={3}>Alle Skripte sind gültig.</td></tr></ErrorBody>
              </ErrorTable>
              <DockTabs>
                <DockTab $pad={10}><SortIcon />Gruppen und Sortierung</DockTab>
                <DockTab $active><ScriptIcon error />Skript Fehler</DockTab>
              </DockTabs>
            </Panel>
          </Column>

          <Panel>
            <Head title="Liste der Felder" />
            <TreeArea>
              <Tree>
                {tree.map(([level, kind, name, open]) => (
                  <Node key={name} $level={level} $selected={level === 0}>
                    <span>{open !== undefined && <Expander open={open} />}</span>
                    {kind === "table" || kind === "column" ? <TableIcon column={kind === "column"} /> : <FieldIcon label={kind} />}
                    {name}
                  </Node>
                ))}
              </Tree>
              <Scroll>
                <ScrollButton aria-label="Nach oben"><Caret dir="up" /></ScrollButton>
                <Thumb $grow={150} /><Gap $grow={104} />
                <ScrollButton aria-label="Nach unten"><Caret /></ScrollButton>
              </Scroll>
              <Scroll $row>
                <ScrollButton aria-label="Nach links"><Caret dir="left" /></ScrollButton>
                <Thumb $grow={156} /><Gap $grow={4} />
                <ScrollButton aria-label="Nach rechts"><Caret dir="right" /></ScrollButton>
              </Scroll>
            </TreeArea>
            <DockTabs>
              <DockTab $pad={10}><Hierarchy />Berichts Explorer</DockTab>
              <DockTab $active><FieldListIcon />Liste der Felder</DockTab>
            </DockTabs>
            <Highlight />
          </Panel>

          <Panel $edge>
            <Head title="Eigenschaften" />
            <ObjectSelect>
              <select aria-label="Objekt" defaultValue="a"><option value="a">EtikettLager &nbsp; Bericht</option></select>
              <Caret />
            </ObjectSelect>
            <Categories>
              <CategoryButtons>
                <Category aria-label="Darstellung"><Brush /></Category>
                <Category aria-label="Verhalten"><Gears /></Category>
                <Category aria-label="Daten"><Database w={11} h={13} /></Category>
                <Category aria-label="Layout"><Size /></Category>
                <Category aria-label="Diverses"><Wrench /></Category>
                <Category aria-label="Favoriten"><Star /></Category>
              </CategoryButtons>
              <Search><input aria-label="Suche" placeholder="Suchtext eingeben..." /><Lens /></Search>
            </Categories>
            <Notch viewBox="0 0 274 7" preserveAspectRatio="xMinYMin slice"><path d="M0 6.500h8l5-6 5 6h600" /></Notch>
            <PropertyList>
              <Property label="Abstand" id="pad"><Box><input id="pad" defaultValue="0; 0; 0; 0" /></Box></Property>
              <Property marker={false}><Pair><PadArrow turn={0} /><Spinner label="Links" /><PadArrow turn={180} /><Spinner label="Rechts" /></Pair></Property>
              <Property marker={false}><Pair><PadArrow turn={90} /><Spinner label="Oben" /><PadArrow turn={270} /><Spinner label="Unten" /></Pair></Property>
              <Property label="Hintergrundfarbe"><Box $tight><Swatch /><SwatchTools><ColorEye /><Caret /></SwatchTools></Box></Property>
              <Property label="Pfad der Stilvorlage" id="path"><Box><input id="path" /><Dots /></Box></Property>
              <Property label="Rahmen">
                <Borders>
                  <BorderButton aria-label="Alle"><GridIcon /></BorderButton>
                  <BorderButton aria-label="Keine" $active><GridIcon faded /></BorderButton>
                  <BorderRule />
                  {["left", "top", "right", "bottom"].map((s) => <BorderButton key={s} aria-label={s}><GridIcon side={s} /></BorderButton>)}
                </Borders>
              </Property>
              <Property label="Rahmenbreite" id="bw">
                <WidthRow><Range type="range" aria-label="Rahmenbreite" defaultValue="10" $fill="10%" /><Box><input id="bw" defaultValue="1" /></Box></WidthRow>
              </Property>
              <Property label="Rahmenfarbe"><Box $tight><Swatch $black /><SwatchTools><ColorEye /><Caret /></SwatchTools></Box></Property>
              <Property marker={false}><Box /></Property>
            </PropertyList>
            <Description>
              <h3>Abstand</h3>
              <p>Gets or sets the control's padding values (measured in report units).</p>
            </Description>
            <DockTabs $left={2}>
              <DockTab $active><PropsIcon />Eigenschaften</DockTab>
              <DockTab $rule><Gallery />Berichtsgalerie</DockTab>
            </DockTabs>
          </Panel>
        </Workspace>

        <StatusBar>
          <span>EtikettLager {"{"} Papierart: Custom {"}"}</span>
          <Zoom>
            <ZoomText>100%</ZoomText>
            <Ico w={6} h={6} stroke={c.dark} strokeWidth="1.500"><path d="M0 3h6" /></Ico>
            <ZoomTrack><Range type="range" aria-label="Zoom" defaultValue="50" $fill="50%" /></ZoomTrack>
            <Ico w={6} h={6} stroke={c.dark} strokeWidth="1.500"><path d="M0 3h6M3 0v6" /></Ico>
            <Ico w={12} h={9}><path fill="#aaa" d="M10 0h1v1h-1zM10 4h1v1h-1zM10 8h1v1h-1zM7 4h1v1H7zM7 8h1v1H7zM4 8h1v1H4z" /></Ico>
          </Zoom>
        </StatusBar>
      </Window>
    </Desktop>
  );
}
